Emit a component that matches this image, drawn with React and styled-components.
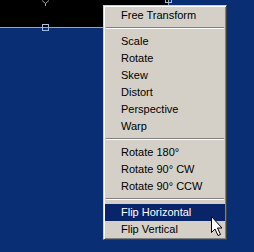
import React from "react";
import styled, { createGlobalStyle } from "styled-components";

const Global = createGlobalStyle`
  html, body { margin: 0; padding: 0; background: #0a2e74; overflow: hidden; }
  #root { width: 254px; height: 252px; }
`;

const Canvas = styled.div`
  position: relative;
  width: 254px;
  height: 252px;
  background: #0a2e74;
  overflow: hidden;
`;

const Document = styled.div`
  width: 168px;
  height: 27px;
  background: #000;
  border-bottom: 1px solid #a4a4a4;
  border-right: 1px solid #a4a4a4;
`;

const Handle = styled.div`
  position: absolute;
  left: ${(p) => p.$x}px;
  top: ${(p) => p.$y}px;
  width: 5px;
  height: 5px;
  border: 1px solid #9fb8e0;
  border-top-color: #b8c4d8;
  background: transparent;
`;

const Pivot = styled.svg`
  position: absolute;
  left: 41px;
  top: 0;
`;

const Menu = styled.ul`
  position: absolute;
  left: 103px;
  top: 5px;
  width: 124px;
  box-sizing: border-box;
  margin: 0;
  padding: 1px;
  list-style: none;
  background: #d4d0c8;
  border: 1px solid;
  border-color: #d4d0c8 #404040 #404040 #d4d0c8;
  box-shadow: inset 1px 1px 0 #ffffff, inset -1px -1px 0 #808080;
  font-family: "Liberation Sans", Arial, sans-serif;
  font-size: 11px;
`;

const Item = styled.li`
  height: 17px;
  line-height: 17px;
  padding-left: 16px;
  white-space: nowrap;
  color: ${(p) => (p.$active ? "#ffffff" : "#000000")};
  background: ${(p) => (p.$active ? "#0a246a" : "transparent")};
`;

const Separator = styled.li`
  height: 9px;
  box-sizing: border-box;
  padding: 3px 1px 0;
  &::before {
    content: "";
    display: block;
    height: 1px;
    background: #808080;
    border-bottom: 1px solid #ffffff;
  }
`;

const Cursor = styled.svg`
  position: absolute;
  left: 210px;
  top: 215px;
`;

const groups = [
  ["Free Transform"],
  ["Scale", "Rotate", "Skew", "Distort", "Perspective", "Warp"],
  ["Rotate 180°", "Rotate 90° CW", "Rotate 90° CCW"],
  ["Flip Horizontal", "Flip Vertical"],
];

export default function App() {
  return (
    <Canvas>
      <Global />
      <Document />
      <Pivot width="9" height="6" viewBox="0 0 9 6">
        <path d="M1 0.5 L4.5 3.5 L8 0.5 M4.5 3.5 L4.5 6" stroke="#a0a0a0" strokeWidth="1" fill="none" />
      </Pivot>
      <Handle $x={42} $y={24} />
      <Handle $x={165} $y={-4} />
      <Menu>
        {groups.map((g, gi) => (
          <React.Fragment key={gi}>
            {gi > 0 && <Separator />}
            {g.map((label) => (
              <Item key={label} $active={label === "Flip Horizontal"}>
                {label}
              </Item>
            ))}
          </React.Fragment>
        ))}
      </Menu>
      <Cursor width="13" height="22" viewBox="0 0 13 22">
        <path
          d="M1.5 1.5 L1.5 17.5 L5 14 L8 20.5 L10.5 19.5 L7.5 13 L12 13 Z"
          fill="#ffffff"
          stroke="#000000"
          strokeWidth="1"
          strokeLinejoin="miter"
        />
      </Cursor>
    </Canvas>
  );
}
